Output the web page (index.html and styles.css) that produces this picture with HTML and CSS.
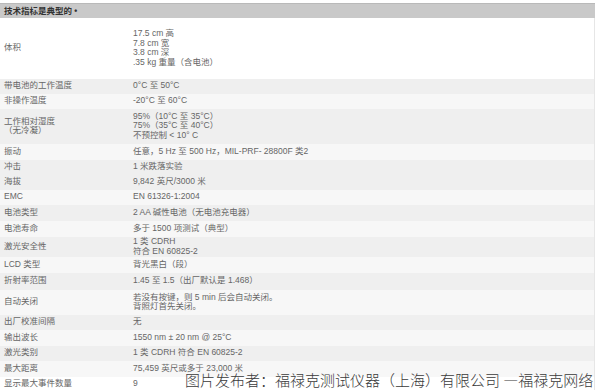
FILE: index.html
```html
<!DOCTYPE html>
<html lang="zh-CN">
<head>
<meta charset="utf-8">
<title>技术指标</title>
<link rel="stylesheet" href="styles.css">
</head>
<body>
<div class="page">
  <table class="spec">
    <tr class="head"><th colspan="2">技术指标是典型的 •</th></tr>
    <tr class="w h61"><td>体积</td><td><div>17.5 cm 高</div><div>7.8 cm 宽</div><div>3.8 cm 深</div><div>.35 kg 重量（含电池）</div></td></tr>
    <tr class="g h15"><td>带电池的工作温度</td><td>0°C 至 50°C</td></tr>
    <tr class="l h15"><td>非操作温度</td><td>-20°C 至 60°C</td></tr>
    <tr class="g h35"><td><div>工作相对湿度</div><div>（无冷凝）</div></td><td><div>95%（10°C 至 35°C）</div><div>75%（35°C 至 40°C）</div><div>不预控制 &lt; 10° C</div></td></tr>
    <tr class="l h16"><td>振动</td><td>任意，5 Hz 至 500 Hz，MIL-PRF- 28800F 类2</td></tr>
    <tr class="g h15"><td>冲击</td><td>1 米跌落实验</td></tr>
    <tr class="g h15"><td>海拔</td><td>9,842 英尺/3000 米</td></tr>
    <tr class="l h15"><td>EMC</td><td>EN 61326-1:2004</td></tr>
    <tr class="g h16"><td>电池类型</td><td>2 AA 碱性电池（无电池充电器）</td></tr>
    <tr class="l h16"><td>电池寿命</td><td>多于 1500 项测试（典型）</td></tr>
    <tr class="g h20"><td>激光安全性</td><td><div>1 类 CDRH</div><div>符合 EN 60825-2</div></td></tr>
    <tr class="l h16"><td>LCD 类型</td><td>背光黑白（段）</td></tr>
    <tr class="g h17"><td>折射率范围</td><td>1.45 至 1.5（出厂默认是 1.468）</td></tr>
    <tr class="l h25"><td>自动关闭</td><td><div>若没有按键，则 5 min 后会自动关闭。</div><div>背照灯首先关闭。</div></td></tr>
    <tr class="g h15"><td>出厂校准间隔</td><td>无</td></tr>
    <tr class="l h16"><td>输出波长</td><td>1550 nm ± 20 nm @ 25°C</td></tr>
    <tr class="g h15"><td>激光类别</td><td>1 类 CDRH 符合 EN 60825-2</td></tr>
    <tr class="l h16"><td>最大距离</td><td>75,459 英尺或多于 23,000 米</td></tr>
    <tr class="w h14"><td>显示最大事件数量</td><td>9</td></tr>
  </table>
  <div class="mark">图片发布者：福禄克测试仪器（上海）有限公司 —福禄克网络</div>
</div>
</body>
</html>
```
FILE: styles.css
```css
html, body {
  margin: 0;
  padding: 0;
  background: #ffffff;
}
.page {
  position: relative;
  width: 600px;
  height: 390px;
  overflow: hidden;
  padding-top: 3px;
  box-sizing: border-box;
  font-family: "Liberation Sans", "Noto Sans CJK SC", sans-serif;
  font-size: 8.5px;
  color: #666666;
}
.spec {
  width: 595px;
  border-collapse: collapse;
  border-spacing: 0;
}
.spec th {
  height: 14px;
  padding: 0 0 0 4px;
  text-align: left;
  font-weight: bold;
  color: #333333;
  background: #c9c9c9;
  border-top: 1px solid #b9b9b9;
  box-sizing: border-box;
  line-height: 12px;
}
.spec td {
  padding: 0 0 0 4px;
  vertical-align: middle;
  line-height: 9.5px;
  white-space: nowrap;
}
.spec td:first-child {
  width: 125px;
}
.spec td:last-child {
  padding-left: 4px;
  border-right: 1px solid #e6e6e6;
}
.w { background: #ffffff; }
.g { background: #efefef; }
.l { background: #f7f7f7; }
.h14 { height: 14px; }
.h15 { height: 15px; }
.h16 { height: 16px; }
.h17 { height: 17px; }
.h20 { height: 20px; }
.h25 { height: 25px; }
.h35 { height: 35px; }
.h61 { height: 61px; }
.mark {
  position: absolute;
  left: 185px;
  top: 372px;
  font-family: "Noto Sans CJK SC", sans-serif;
  font-size: 15px;
  font-weight: 300;
  line-height: 16px;
  color: #3a3a3a;
  white-space: nowrap;
}
```
